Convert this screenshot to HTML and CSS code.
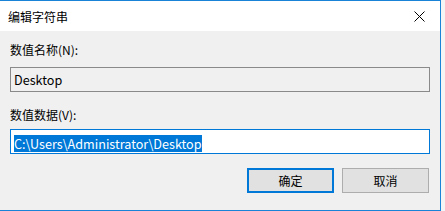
FILE: index.html
```html
<!DOCTYPE html>
<html lang="zh-CN">
<head>
    <meta charset="UTF-8">
    <title>编辑字符串</title>
    <link rel="stylesheet" href="styles.css">
</head>
<body>

<div class="dialog">
    <div class="title-bar">
        <span class="title">编辑字符串</span>
        <span class="close-btn">
            <svg width="11" height="11" viewBox="0 0 11 11">
                <path d="M0.5 0.5 L10.5 10.5 M10.5 0.5 L0.5 10.5" stroke="#000" stroke-width="1" fill="none"/>
            </svg>
        </span>
    </div>

    <div class="content">
        <div class="label">数值名称(N):</div>
        <div class="field readonly">Desktop</div>

        <div class="label label-data">数值数据(V):</div>
        <div class="field focused"><span class="selected">C:\Users\Administrator\Desktop</span></div>

        <div class="buttons">
            <button class="btn default">确定</button>
            <button class="btn">取消</button>
        </div>
    </div>
</div>

</body>
</html>
```

FILE: styles.css
```css
body {
    margin: 0;
    padding: 0;
    width: 445px;
    height: 211px;
    overflow: hidden;
    background-color: #f4f4f4;
    font-family: "Noto Sans CJK SC", "Noto Sans", sans-serif;
    font-size: 12px;
    color: #000;
}

.dialog {
    width: 440px;
    height: 209px;
    background-color: #f0f0f0;
    border-top: 1px solid #1883d7;
    border-right: 1px solid #1883d7;
    border-bottom: 1px solid #1883d7;
}

.title-bar {
    height: 30px;
    background-color: #fff;
    display: flex;
    align-items: center;
    justify-content: space-between;
    padding-left: 8px;
}

.title {
    line-height: 16px;
    margin-top: 1px;
}

.close-btn {
    display: flex;
    width: 46px;
    height: 30px;
    align-items: center;
    justify-content: center;
    margin-right: -2px;
    margin-top: 1px;
}

.content {
    padding: 11px 10px 0 10px;
}

.label {
    line-height: 16px;
    height: 16px;
}

.label-data {
    margin-top: 15px;
}

.field {
    box-sizing: border-box;
    height: 25px;
    margin-top: 9px;
    padding: 0 3px;
    border: 1px solid #7a7a7a;
    font-size: 12.6px;
    line-height: 23px;
    background-color: #fff;
    white-space: nowrap;
}

.field.readonly {
    background-color: #f0f0f0;
    border-color: #8a8a8a;
}

.field.focused {
    margin-top: 6px;
    border-color: #0078d7;
}

.selected {
    display: inline-block;
    background-color: #0078d7;
    color: #fff;
    line-height: 17px;
    vertical-align: middle;
}

.buttons {
    display: flex;
    justify-content: flex-end;
    gap: 8px;
    margin-top: 14px;
    padding-right: 1px;
}

.btn {
    box-sizing: border-box;
    width: 87px;
    height: 25px;
    padding: 0;
    background-color: #e1e1e1;
    border: 1px solid #adadad;
    font-family: "Noto Sans CJK SC", "Noto Sans", sans-serif;
    font-size: 12px;
    color: #000;
}

.btn.default {
    border: 2px solid #0078d7;
}
```
